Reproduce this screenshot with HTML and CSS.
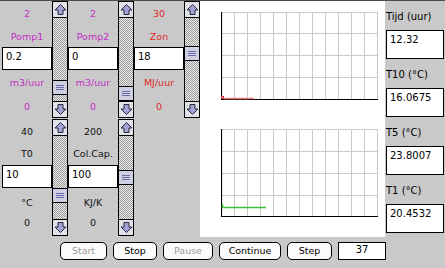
FILE: index.html
```
<!DOCTYPE html>
<html>
<head>
<meta charset="utf-8">
<link rel="stylesheet" href="styles.css">
</head>
<body>
<div class="window">
  <div class="main">
    <div class="controls">
      <div class="col first">
        <div class="block">
          <div class="stack top magenta">
            <div class="r1">2</div>
            <div class="r2">Pomp1</div>
            <div class="field">0.2</div>
            <div class="r4">m3/uur</div>
            <div class="r5">0</div>
          </div>
          <div class="scroll">
            <div class="arrow"><svg width="13" height="13" viewBox="0 0 13 13"><path d="M6.5 1.5L12 7H9V11.5H4V7H1Z"/></svg></div>
            <div class="track"><div class="thumb" style="margin-top:62px"><i></i><i></i><i></i></div></div>
            <div class="arrow down"><svg width="13" height="13" viewBox="0 0 13 13"><path d="M6.5 1.5L12 7H9V11.5H4V7H1Z"/></svg></div>
          </div>
        </div>
        <div class="block">
          <div class="stack bottom">
            <div class="b1">40</div>
            <div class="b2">T0</div>
            <div class="field">10</div>
            <div class="b4">°C</div>
            <div class="b5">0</div>
          </div>
          <div class="scroll">
            <div class="arrow"><svg width="13" height="13" viewBox="0 0 13 13"><path d="M6.5 1.5L12 7H9V11.5H4V7H1Z"/></svg></div>
            <div class="track"><div class="thumb" style="margin-top:52px"><i></i><i></i><i></i></div></div>
            <div class="arrow down"><svg width="13" height="13" viewBox="0 0 13 13"><path d="M6.5 1.5L12 7H9V11.5H4V7H1Z"/></svg></div>
          </div>
        </div>
      </div>
      <div class="col">
        <div class="block">
          <div class="stack top magenta">
            <div class="r1">2</div>
            <div class="r2">Pomp2</div>
            <div class="field">0</div>
            <div class="r4">m3/uur</div>
            <div class="r5">0</div>
          </div>
          <div class="scroll">
            <div class="arrow"><svg width="13" height="13" viewBox="0 0 13 13"><path d="M6.5 1.5L12 7H9V11.5H4V7H1Z"/></svg></div>
            <div class="track"><div class="thumb" style="margin-top:68px"><i></i><i></i><i></i></div></div>
            <div class="arrow down"><svg width="13" height="13" viewBox="0 0 13 13"><path d="M6.5 1.5L12 7H9V11.5H4V7H1Z"/></svg></div>
          </div>
        </div>
        <div class="block">
          <div class="stack bottom">
            <div class="b1">200</div>
            <div class="b2">Col.Cap.</div>
            <div class="field">100</div>
            <div class="b4">KJ/K</div>
            <div class="b5">0</div>
          </div>
          <div class="scroll">
            <div class="arrow"><svg width="13" height="13" viewBox="0 0 13 13"><path d="M6.5 1.5L12 7H9V11.5H4V7H1Z"/></svg></div>
            <div class="track"><div class="thumb" style="margin-top:34px"><i></i><i></i><i></i></div></div>
            <div class="arrow down"><svg width="13" height="13" viewBox="0 0 13 13"><path d="M6.5 1.5L12 7H9V11.5H4V7H1Z"/></svg></div>
          </div>
        </div>
      </div>
      <div class="col">
        <div class="block">
          <div class="stack top red">
            <div class="r1">30</div>
            <div class="r2">Zon</div>
            <div class="field">18</div>
            <div class="r4">MJ/uur</div>
            <div class="r5">0</div>
          </div>
          <div class="scroll">
            <div class="arrow"><svg width="13" height="13" viewBox="0 0 13 13"><path d="M6.5 1.5L12 7H9V11.5H4V7H1Z"/></svg></div>
            <div class="track"><div class="thumb" style="margin-top:28px"><i></i><i></i><i></i></div></div>
            <div class="arrow down"><svg width="13" height="13" viewBox="0 0 13 13"><path d="M6.5 1.5L12 7H9V11.5H4V7H1Z"/></svg></div>
          </div>
        </div>
      </div>
    </div>

    <div class="plot">
      <svg class="chart first-chart" width="157" height="88" viewBox="0 0 157 88">
        <path class="grid" d="M13.5 0V87M26.5 0V87M39.5 0V87M52.5 0V87M65.5 0V87M78.5 0V87M91.5 0V87M104.5 0V87M117.5 0V87M130.5 0V87M143.5 0V87M156.5 0V87M0 0.5H157M0 21.5H157M0 43.5H157M0 65.5H157"/>
        <path class="axis" d="M0.5 0V88M0 87.5H157"/>
        <path class="red-line" d="M2 86.5H33"/>
        <rect class="red-dot" x="0.5" y="84.5" width="2" height="2"/>
      </svg>
      <svg class="chart second-chart" width="157" height="88" viewBox="0 0 157 88">
        <path class="grid" d="M13.5 0V87M26.5 0V87M39.5 0V87M52.5 0V87M65.5 0V87M78.5 0V87M91.5 0V87M104.5 0V87M117.5 0V87M130.5 0V87M143.5 0V87M156.5 0V87M0 0.5H157M0 22.5H157M0 44.5H157M0 66.5H157"/>
        <path class="axis" d="M0.5 0V88M0 87.5H157"/>
        <path class="green-line" d="M1.5 75V78.5H45"/>
      </svg>
    </div>

    <div class="readouts">
      <div class="rlabel">Tijd (uur)</div>
      <div class="rbox">12.32</div>
      <div class="rlabel">T10 (°C)</div>
      <div class="rbox">16.0675</div>
      <div class="rlabel">T5 (°C)</div>
      <div class="rbox">23.8007</div>
      <div class="rlabel">T1 (°C)</div>
      <div class="rbox">20.4532</div>
    </div>
  </div>

  <div class="bar">
    <div class="btn disabled w-start">Start</div>
    <div class="btn w-stop">Stop</div>
    <div class="btn disabled w-pause">Pause</div>
    <div class="btn w-continue">Continue</div>
    <div class="btn w-step">Step</div>
    <div class="counter">37</div>
  </div>
</div>
</body>
</html>
```
FILE: styles.css
```
html, body {
  margin: 0;
  padding: 0;
}
body {
  background: #c9c9c9;
  font-family: "DejaVu Sans", "Liberation Sans", sans-serif;
  color: #000;
}
.window {
  width: 445px;
  height: 268px;
  border-top: 1px solid #4a4a4a;
  box-sizing: border-box;
  display: flex;
  flex-direction: column;
}
.main {
  display: flex;
  height: 236px;
}
.controls {
  display: flex;
  width: 200px;
}
.col {
  width: 66px;
  display: flex;
  flex-direction: column;
}
.col.first {
  width: 68px;
  padding-left: 2px;
  box-sizing: border-box;
}
.block {
  display: flex;
  height: 118px;
}
.stack {
  width: 50px;
  display: flex;
  flex-direction: column;
  text-align: center;
  font-size: 9.5px;
}
.stack > div {
  display: flex;
  align-items: center;
  justify-content: center;
  white-space: nowrap;
}
.magenta { color: #c52fc5; }
.red { color: #dc2a2a; }
.bottom { color: #111; }

.r1 { height: 24px; }
.r2 { height: 22px; }
.r4 { height: 25px; }
.r5 { height: 23px; }
.b1 { height: 24px; }
.b2 { height: 20px; margin-bottom: 2px; }
.b4 { height: 28px; }
.b5 { height: 12px; }

.stack > .field {
  display: block;
  height: 23px;
  box-sizing: border-box;
  border: 1px solid #000;
  background: #fff;
  color: #000;
  font-size: 10px;
  line-height: 12px;
  padding: 3px 0 0 3px;
  text-align: left;
}

.scroll {
  width: 16px;
  height: 117px;
  box-sizing: border-box;
  border: 1px solid #000;
  display: flex;
  flex-direction: column;
  background: #ddd;
}
.arrow {
  height: 16px;
  box-sizing: border-box;
  border-bottom: 1px solid #000;
  background: #e2e2ea;
  display: flex;
  align-items: center;
  justify-content: center;
}
.arrow.down {
  border-bottom: none;
  border-top: 1px solid #000;
}
.arrow.down svg {
  transform: rotate(180deg);
}
.arrow path {
  fill: #a2a2d6;
  stroke: #2a2a3a;
  stroke-width: 1;
  stroke-linejoin: miter;
}
.track {
  flex: 1;
  background: repeating-conic-gradient(#9a9a9a 0 25%, #ececec 0 50%) 0 0 / 2px 2px;
  display: flex;
  flex-direction: column;
}
.thumb {
  height: 15px;
  box-sizing: border-box;
  border-top: 1px solid #000;
  border-bottom: 1px solid #000;
  background: #cfcfe4;
  display: flex;
  flex-direction: column;
  align-items: center;
  justify-content: center;
  gap: 1px;
}
.thumb i {
  display: block;
  width: 8px;
  height: 1px;
  background: #6b6ba8;
}

.plot {
  width: 185px;
  height: 236px;
  background: #fff;
  box-sizing: border-box;
  padding-left: 21px;
  display: flex;
  flex-direction: column;
}
.chart {
  display: block;
}
.first-chart { margin-top: 11px; }
.second-chart { margin-top: 29px; }
.grid {
  stroke: #c9c9c9;
  stroke-width: 1;
  fill: none;
}
.axis {
  stroke: #000;
  stroke-width: 1.2;
  fill: none;
}
.red-line {
  stroke: #f07a7a;
  stroke-width: 1.5;
  fill: none;
}
.red-dot {
  stroke: #d03030;
  stroke-width: 1;
  fill: none;
}
.green-line {
  stroke: #3cbf3c;
  stroke-width: 1.5;
  fill: none;
}

.readouts {
  width: 60px;
  padding-left: 1px;
  box-sizing: border-box;
  display: flex;
  flex-direction: column;
}
.rlabel {
  height: 29px;
  font-size: 10px;
  line-height: 31px;
  white-space: nowrap;
}
.rbox {
  width: 58px;
  height: 29px;
  box-sizing: border-box;
  border: 1px solid #000;
  background: #fff;
  font-size: 10px;
  line-height: 12px;
  padding: 3px 0 0 3px;
}

.bar {
  height: 31px;
  box-sizing: border-box;
  padding: 5px 0 0 60px;
  display: flex;
  gap: 6px;
}
.btn, .counter {
  height: 18px;
  box-sizing: border-box;
  border: 1px solid #000;
  background: #fbfbfb;
  font-size: 9.5px;
  line-height: 16px;
  text-align: center;
}
.btn {
  border-radius: 5px;
}
.btn.disabled {
  color: #9c9c9c;
}
.w-start { width: 47px; }
.w-stop { width: 44px; }
.w-pause { width: 50px; }
.w-continue { width: 62px; }
.w-step { width: 45px; }
.counter {
  width: 48px;
  background: #fff;
  font-size: 10px;
  line-height: 14px;
}
```
